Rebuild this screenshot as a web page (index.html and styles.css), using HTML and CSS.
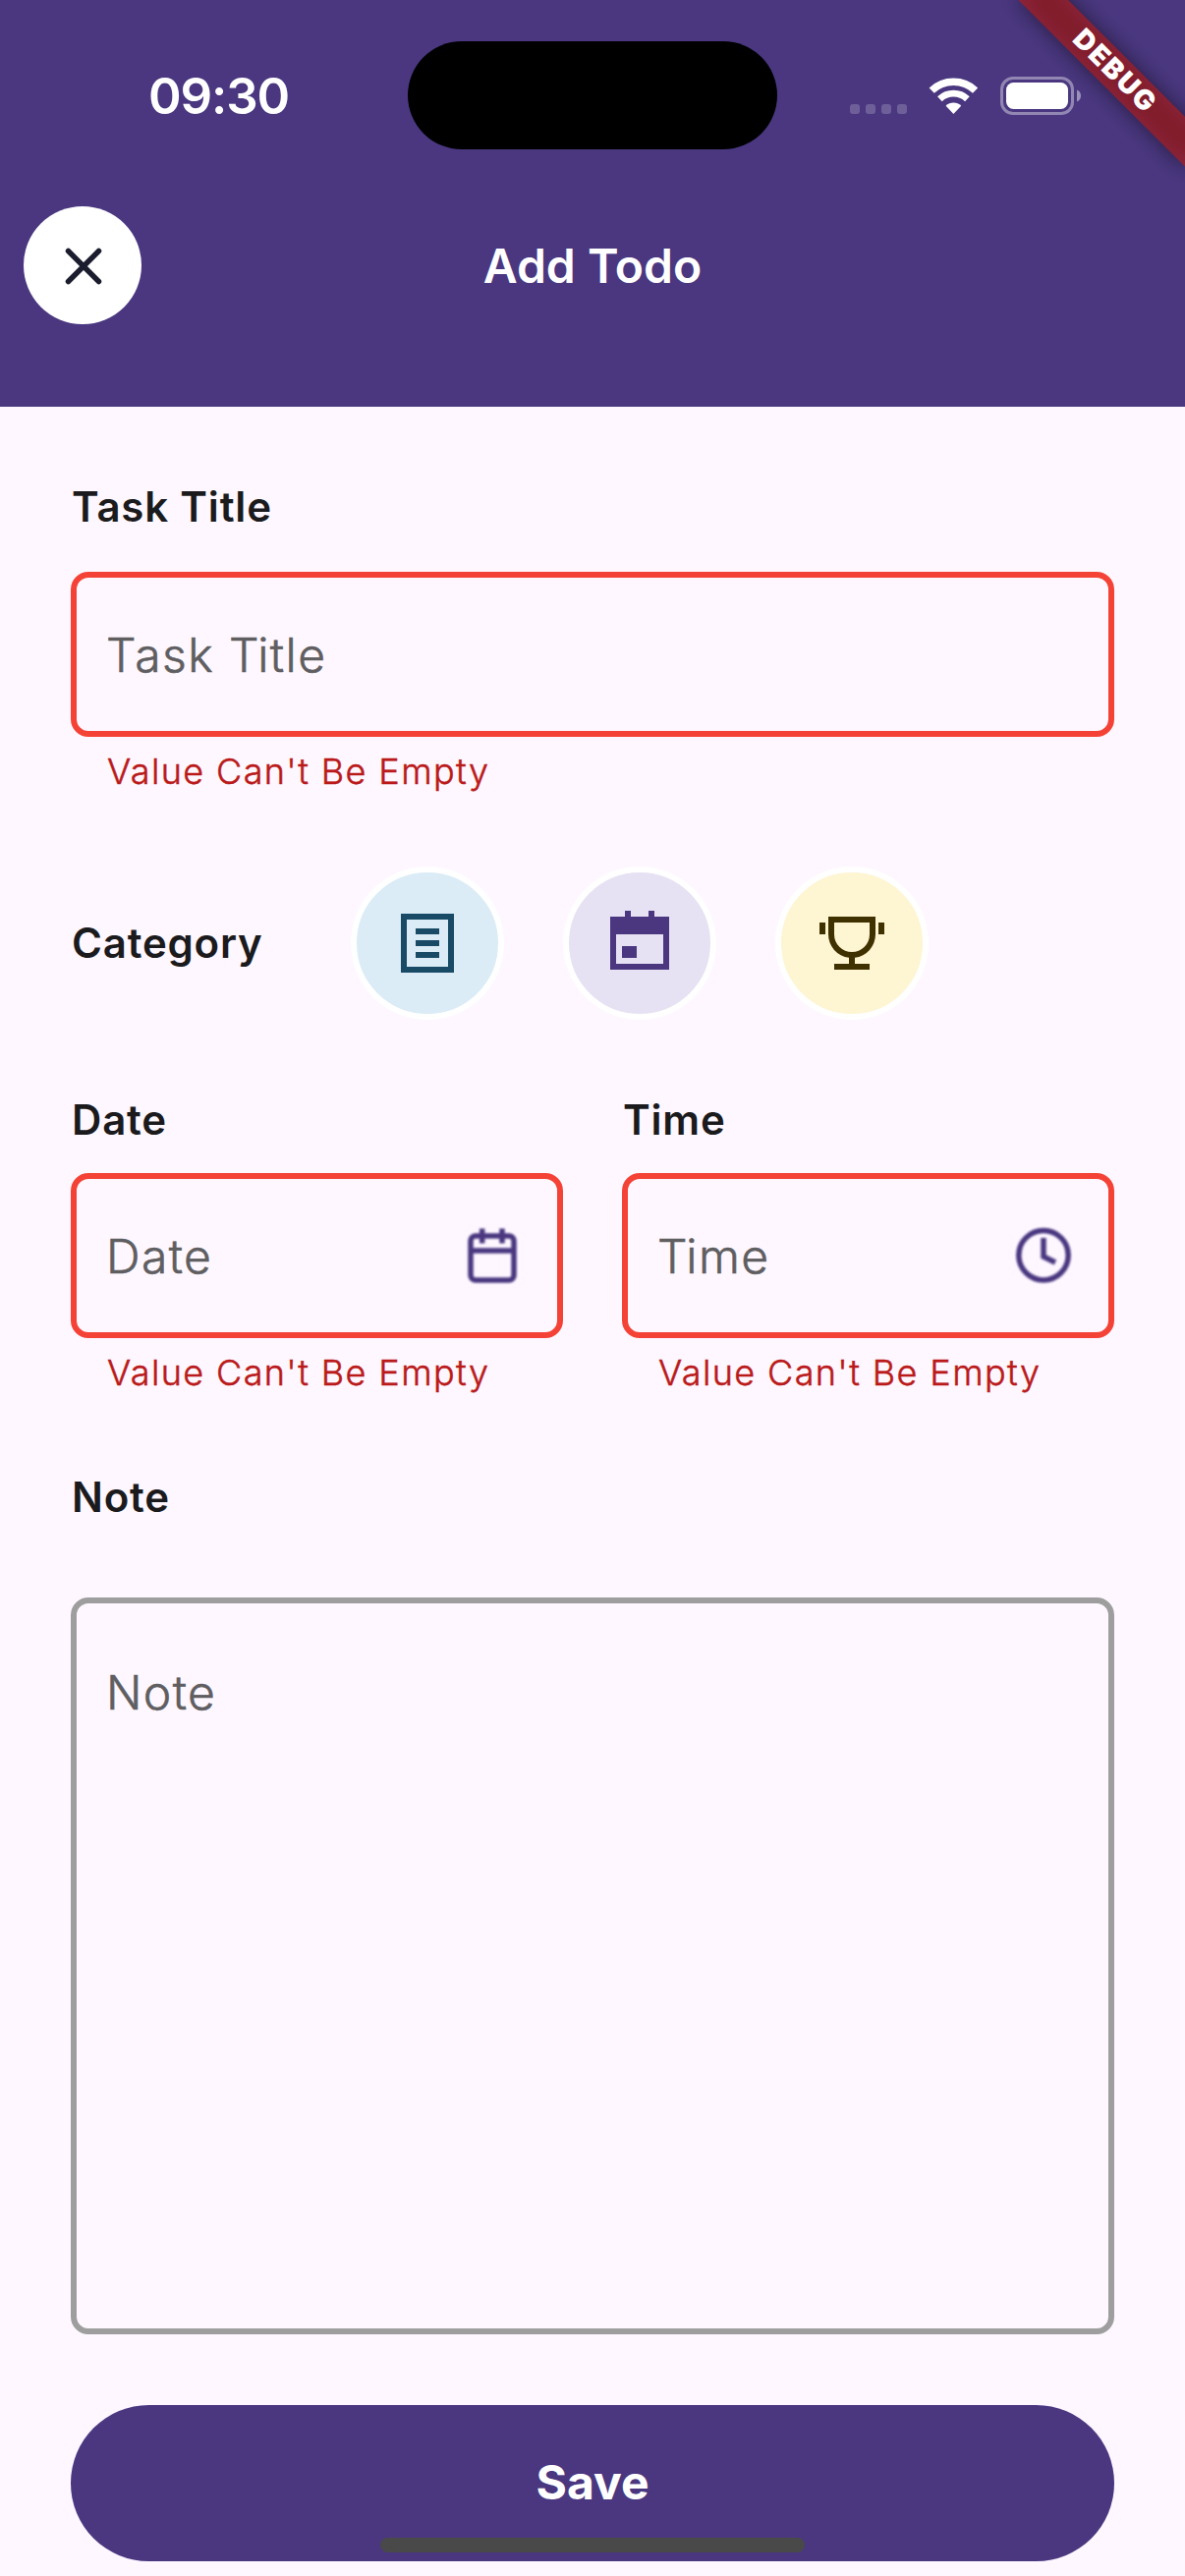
FILE: index.html
```
<!DOCTYPE html>
<html lang="en">
<head>
<meta charset="utf-8">
<title>Add Todo</title>
<link rel="stylesheet" href="styles.css">
</head>
<body>
<div class="screen">
  <header class="header">
    <div class="status-bar">
      <div class="status-left"><span class="clock">09:30</span></div>
      <div class="island"></div>
      <div class="status-right">
        <div class="signal"><i></i><i></i><i></i><i></i></div>
        <svg class="wifi" width="51" height="37" viewBox="0 0 51 37" fill="none" stroke="#fff">
          <path stroke-width="7.500" d="M3.200 13.100A32.300 32.300 0 0 1 47.600 13.100"/>
          <path stroke-width="6.800" d="M11.400 21.700A20.400 20.400 0 0 1 39.400 21.700"/>
          <path fill="#fff" stroke="none" d="M25.400 37L17.600 28.800A11 11 0 0 1 33.200 28.800z"/>
        </svg>
        <svg class="battery" width="82" height="39" viewBox="0 0 82 39">
          <rect x="1.500" y="1.500" width="72" height="36" rx="11.500" fill="none" stroke="#fff" stroke-opacity=".4" stroke-width="3"/>
          <rect x="6" y="6" width="63" height="27" rx="7.500" fill="#fff"/>
          <path d="M78 13.500c2.600 1 4 3.300 4 6s-1.400 5-4 6z" fill="#fff" fill-opacity=".45"/>
        </svg>
      </div>
    </div>
    <div class="app-bar">
      <button class="close" aria-label="Close">
        <svg width="120" height="120" viewBox="0 0 120 120"><path d="M45.500 45.500l31 31M76.500 45.500l-31 31" stroke="#1b1d2e" stroke-width="5.500" stroke-linecap="round"/></svg>
      </button>
      <h1 class="title">Add Todo</h1>
    </div>
    <div class="debug"><span class="debug-shadow"></span><span class="debug-band">DEBUG</span></div>
  </header>

  <main class="form">
    <section class="field">
      <label class="label">Task Title</label>
      <div class="input error"><span class="hint"><b>T</b>ask <b>T</b>itle</span></div>
      <p class="message">Value Can't Be Empty</p>
    </section>

    <section class="category">
      <span class="label">Category</span>
      <div class="chips">
        <div class="chip blue"><svg width="72" height="72" viewBox="0 0 24 24"><path fill="#194a66" fill-rule="evenodd" d="M3 2h18v20H3zM5 4v16h14V4zM8 7h8v2H8zM8 11h8v2H8zM8 15h8v2H8z"/></svg></div>
        <div class="chip purple"><svg width="72" height="72" viewBox="0 0 24 24"><path fill="#4a3780" fill-rule="evenodd" d="M2 3h5V1h2v2h6V1h2v2h5v18H2zM4 9v10h16V9zM6 13h5v4H6z"/></svg></div>
        <div class="chip yellow"><svg width="72" height="72" viewBox="0 0 24 24"><path fill="#403100" fill-rule="evenodd" d="M4 3h16v6a8 8 0 0 1-7 7.940V19h5v2H6v-2h5v-2.060A8 8 0 0 1 4 9zM6 5v4a6 6 0 0 0 12 0V5zM1 5h2v4H1zM21 5h2v4h-2z"/></svg></div>
      </div>
    </section>

    <div class="columns">
      <section class="field compact">
        <label class="label">Date</label>
        <div class="input error"><span class="hint">Date</span>
          <svg class="suffix" width="72" height="72" viewBox="0 0 72 72"><rect x="14" y="16" width="44" height="45" rx="5"/><path d="M14 31h44M25.700 8.500v15M46 8.500v15"/></svg>
        </div>
        <p class="message">Value Can't Be Empty</p>
      </section>
      <section class="field compact">
        <label class="label">Time</label>
        <div class="input error"><span class="hint"><b>T</b>ime</span>
          <svg class="suffix" width="72" height="72" viewBox="0 0 72 72"><circle cx="36" cy="35.700" r="25.200"/><path d="M36 18v19l12 6"/></svg>
        </div>
        <p class="message">Value Can't Be Empty</p>
      </section>
    </div>

    <section class="field note">
      <label class="label">Note</label>
      <div class="input area"><span class="hint">Note</span></div>
    </section>

    <button class="save">Save</button>
  </main>
  <div class="home-indicator"></div>
</div>
</body>
</html>
```
FILE: styles.css
```
* { box-sizing: border-box; }

body {
  margin: 0;
  background: #fef7ff;
  font-family: Inter, "Liberation Sans", sans-serif;
}

.screen {
  position: relative;
  width: 1206px;
  height: 2622px;
  overflow: hidden;
  background: #fef7ff;
  color: #1b1b1d;
}

.header {
  position: relative;
  height: 414px;
  overflow: hidden;
  background: #4a3780;
  color: #fff;
}

.status-bar {
  display: grid;
  grid-template-columns: 415px 376px 415px;
  height: 210px;
  padding-top: 42px;
}

.status-left { padding: 25px 0 0 151px; }
.clock { font-size: 51px; line-height: 62px; font-weight: 600; letter-spacing: -1.1px; }
.island { height: 110px; border-radius: 55px; background: #000; }

.status-right { display: flex; align-items: flex-start; padding: 36px 0 0 74px; }
.signal { display: flex; gap: 6px; width: 80px; padding-top: 28px; }
.signal i { width: 10px; height: 10px; border-radius: 3px; background: rgba(255, 255, 255, .2); }
.wifi { margin-top: 1px; }
.battery { margin-left: 22px; }

.app-bar {
  display: grid;
  grid-template-columns: 120px 1fr 120px;
  align-items: center;
  height: 120px;
  padding: 0 24px;
}

.close { width: 120px; height: 120px; padding: 0; border: 0; border-radius: 50%; background: #fff; }
.close svg { display: block; }
.title { margin: 0; padding-top: 2px; font-size: 48px; line-height: 58px; font-weight: 600; text-align: center; }

/* corner ribbon, rotated around the top right corner */
.debug { position: absolute; top: 0; left: 1206px; width: 0; height: 0; transform: rotate(45deg); }
.debug-shadow, .debug-band { position: absolute; left: -120px; top: 84px; width: 240px; height: 36px; }
.debug-shadow { background: rgba(0, 0, 0, .5); filter: blur(11px); }
.debug-band {
  padding-left: 2px;
  background: rgba(183, 28, 28, .627);
  font-size: 28px;
  line-height: 34px;
  font-weight: 900;
  letter-spacing: 2px;
  text-align: center;
}

.form { padding: 73px 72px 0; }
.label { display: block; padding-left: 1px; font-size: 42px; line-height: 58px; font-weight: 600; letter-spacing: .8px; }

.input {
  display: flex;
  align-items: center;
  justify-content: space-between;
  height: 168px;
  margin-top: 37px;
  padding: 0 30px;
  border: 6px solid #9e9e9e;
  border-radius: 18px;
}
.input.error { border-color: #f44336; }
.hint { padding-top: 2px; font-size: 48px; line-height: 72px; font-weight: 300; letter-spacing: 1.4px; color: #5f5e61; -webkit-text-stroke: .6px #5f5e61; }
/* tighter pair after a capital T */
.hint b { font-weight: inherit; letter-spacing: -1.2px; }
.message { margin: 11px 0 0 37px; padding-bottom: 1px; font-size: 36px; line-height: 48px; font-weight: 300; letter-spacing: 1.38px; color: #ba1a1a; -webkit-text-stroke: .5px #ba1a1a; white-space: nowrap; }

.suffix {
  fill: none;
  stroke: #4a3780;
  stroke-width: 5.5;
  filter: blur(.8px);
}

.category { display: flex; align-items: center; height: 156px; margin-top: 72px; }
.category .label { width: 285px; }
.chips { display: flex; gap: 60px; }
.chip { display: flex; align-items: center; justify-content: center; width: 156px; height: 156px; border: 6px solid #fff; border-radius: 50%; }
.blue { background: #dbecf6; }
.purple { background: #e7e2f3; }
.yellow { background: #fef5d3; }

.columns { display: grid; grid-template-columns: 1fr 1fr; gap: 60px; margin-top: 73px; }
.compact .input { margin-top: 25px; }

.note { margin-top: 73px; }
.input.area { align-items: flex-start; height: 750px; margin-top: 73px; padding-top: 53px; }

.save {
  display: block;
  width: 1062px;
  height: 159px;
  margin-top: 72px;
  padding: 0 0 2px;
  border: 0;
  border-radius: 80px;
  background: #4a3780;
  color: #fff;
  font: 700 48px/58px Inter, "Liberation Sans", sans-serif;
}

.home-indicator { position: absolute; left: 387px; top: 2583px; width: 432px; height: 15px; border-radius: 8px; background: #494949; }
```
